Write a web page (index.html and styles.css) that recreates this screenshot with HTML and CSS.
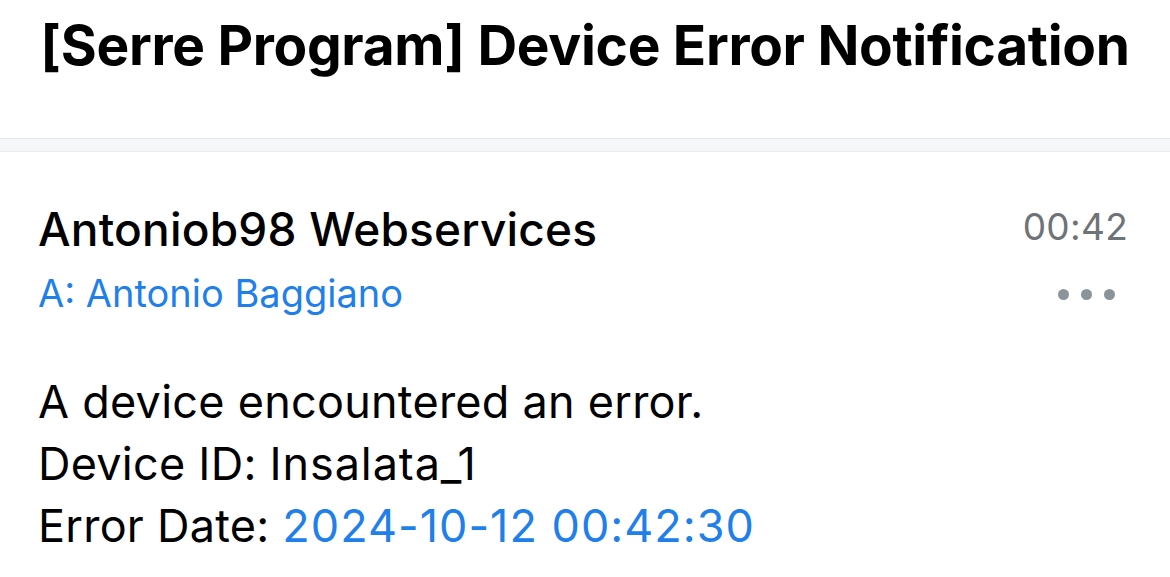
FILE: index.html
```html
<!DOCTYPE html>
<html lang="it">
<head>
<meta charset="utf-8">
<title>Device Error Notification</title>
<link rel="stylesheet" href="styles.css">
</head>
<body>
  <header class="subject">
    <h1 class="subject-title">[Serre Program] Device Error Notification</h1>
  </header>
  <div class="divider"></div>
  <section class="message">
    <div class="meta">
      <div class="meta-left">
        <div class="sender">Antoniob98 Webservices</div>
        <div class="recipient">A: Antonio Baggiano</div>
      </div>
      <div class="meta-right">
        <div class="time">00:42</div>
        <div class="more" aria-label="Altro">
          <span class="dot"></span><span class="dot"></span><span class="dot"></span>
        </div>
      </div>
    </div>
    <div class="body">
      <p class="line">A device encountered an error.</p>
      <p class="line">Device ID: <span class="id">Insalata_1</span></p>
      <p class="line">Error Date: <span class="link">2024-10-12 00:42:30</span></p>
    </div>
  </section>
</body>
</html>
```

FILE: styles.css
```css
html, body {
  margin: 0;
  padding: 0;
  background: #ffffff;
  color: #000000;
  font-family: "Inter", "Roboto", "Liberation Sans", sans-serif;
}

.subject {
  height: 138px;
  display: flex;
  justify-content: center;
  box-sizing: border-box;
  padding-top: 11px;
}

.subject-title {
  margin: 0;
  font-size: 55px;
  font-weight: 700;
  line-height: 68px;
  letter-spacing: -0.3px;
  white-space: nowrap;
}

.divider {
  height: 12px;
  background: #f6f7f8;
  border-top: 1px solid #e6e7e9;
  border-bottom: 1px solid #ebecee;
}

.message {
  padding: 0 42px 0 38px;
}

.meta {
  display: flex;
  justify-content: space-between;
  padding-top: 52px;
}

.sender {
  font-size: 46px;
  font-weight: 500;
  line-height: 50px;
  letter-spacing: 0.2px;
}

.recipient {
  font-size: 38px;
  line-height: 50px;
  margin-top: 14px;
  color: #1f80ea;
}

.meta-right {
  display: flex;
  flex-direction: column;
  align-items: flex-end;
  margin-top: -2px;
}

.time {
  font-size: 37px;
  line-height: 50px;
  letter-spacing: 0.3px;
  color: #6e7378;
}

.more {
  display: flex;
  gap: 12px;
  margin-top: 37px;
  margin-right: 13px;
}

.dot {
  width: 11px;
  height: 11px;
  border-radius: 50%;
  background: #8c949b;
}

.body {
  padding-top: 53px;
}

.line {
  margin: 0;
  font-size: 45px;
  line-height: 62px;
  letter-spacing: 0.25px;
}

.id {
  letter-spacing: 0.9px;
}

.link {
  color: #1f80ea;
  letter-spacing: 1px;
}
```
